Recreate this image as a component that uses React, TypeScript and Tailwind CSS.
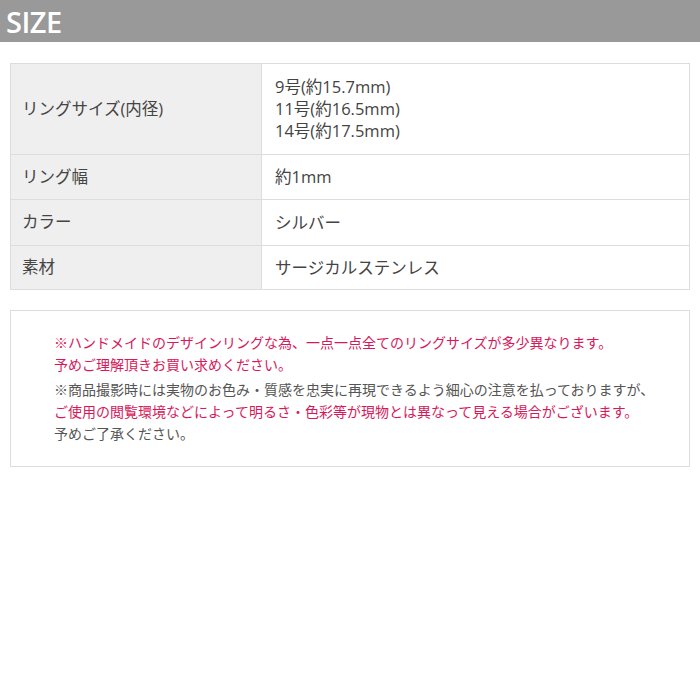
import React from "react";

const rows = [
  { label: "リングサイズ(内径)", value: ["9号(約15.7mm)", "11号(約16.5mm)", "14号(約17.5mm)"], h: "h-[90px]" },
  { label: "リング幅", value: ["約1mm"], h: "h-[45px]" },
  { label: "カラー", value: ["シルバー"], h: "h-[46px]" },
  { label: "素材", value: ["サージカルステンレス"], h: "h-[44px]" },
];

const App = () => {
  return (
    <div className="w-[700px] h-[700px] bg-white" style={{ fontFamily: '"Open Sans", "Noto Sans CJK JP", sans-serif' }}>
      <div className="h-[42px] bg-[#999999] flex items-center pl-[6px]">
        <h1 className="text-[29px] font-semibold text-white leading-none tracking-[-0.5px]">SIZE</h1>
      </div>

      <div className="mx-[10px] mt-[21px] border border-[#dddddd]">
        {rows.map((row, i) => (
          <div key={row.label} className={`flex ${row.h} ${i > 0 ? "border-t border-[#dddddd]" : ""}`}>
            <div className="w-[251px] bg-[#efefef] border-r border-[#dddddd] flex items-center pl-[11px] text-[16.5px] text-[#444]">
              {row.label}
            </div>
            <div className="flex-1 flex flex-col justify-center pl-[13px] text-[16.5px] leading-[22px] text-[#444]">
              {row.value.map((v) => (
                <span key={v}>{v}</span>
              ))}
            </div>
          </div>
        ))}
      </div>

      <div className="mx-[10px] mt-[20px] h-[157px] border border-[#dddddd] pt-[21px] pl-[43px] text-[14px] leading-[22px]">
        <p className="text-[#d6195a]">
          ※ハンドメイドのデザインリングな為、一点一点全てのリングサイズが多少異なります。
          <br />
          予めご理解頂きお買い求めください。
        </p>
        <p className="mt-[3px] text-[#555]">
          ※商品撮影時には実物のお色み・質感を忠実に再現できるよう細心の注意を払っておりますが、
          <br />
          <span className="text-[#d6195a]">ご使用の閲覧環境などによって明るさ・色彩等が現物とは異なって見える場合がございます。</span>
          <br />
          予めご了承ください。
        </p>
      </div>
    </div>
  );
};

export default App;
